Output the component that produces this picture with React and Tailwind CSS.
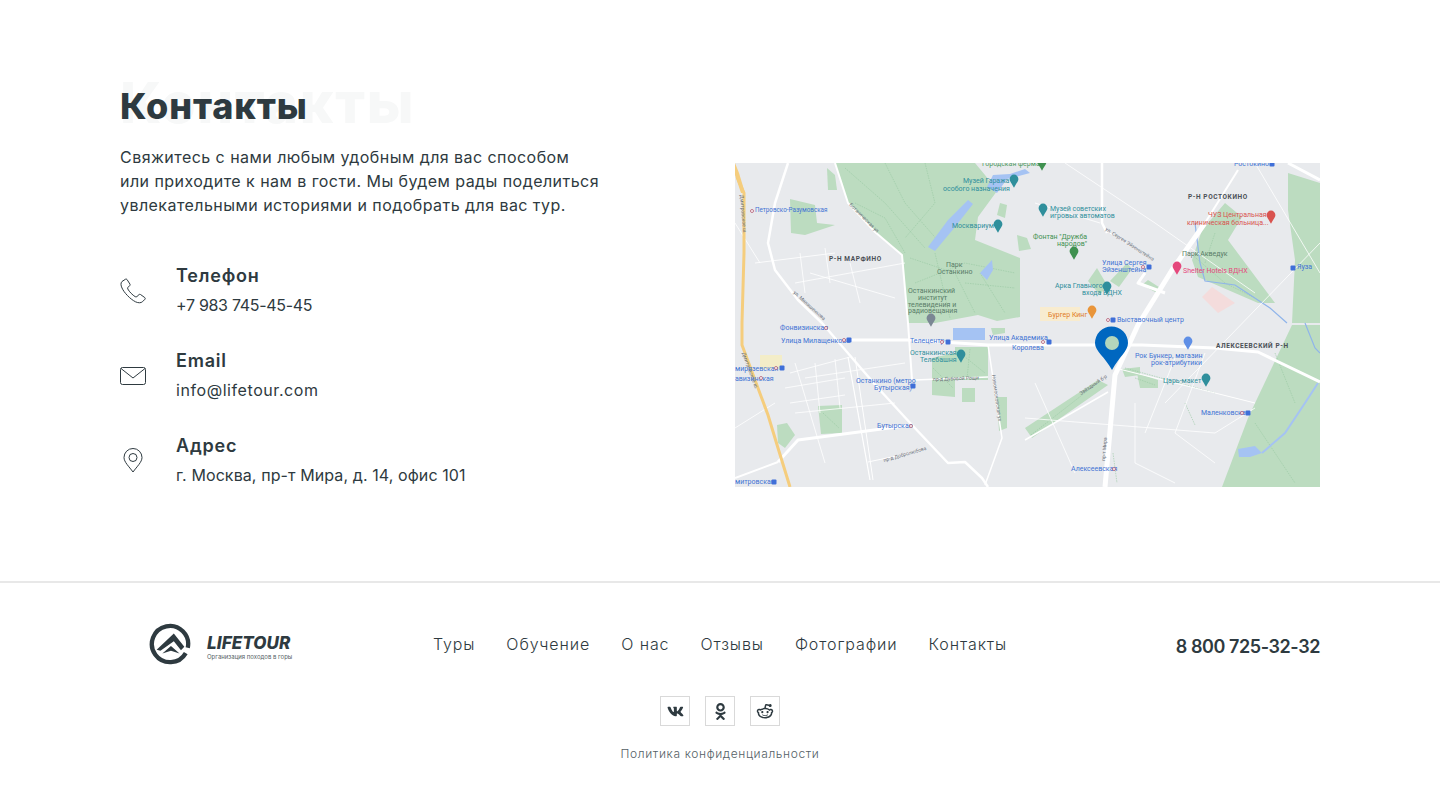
import { FaVk, FaOdnoklassniki } from "react-icons/fa";
import { RiRedditLine } from "react-icons/ri";

const navLinks = ["Туры", "Обучение", "О нас", "Отзывы", "Фотографии", "Контакты"];

const greens = [
  "100,0 240,0 250,12 262,28 243,54 240,77 285,95 285,154 262,158 243,152 200,160 173,160 167,92 140,69 113,40",
  "92,5 100,12 102,27 93,27",
  "55,36 80,42 82,60 100,62 70,72 56,70",
  "265,40 272,42 270,55 262,52",
  "282,72 292,75 296,86 284,88",
  "467,67 490,40 507,54 493,77 540,140 523,140 463,114 457,97",
  "553,10 585,20 585,160 557,160 560,97 553,47",
  "557,162 585,162 585,324 487,324 513,255",
  "297,275 373,222 363,217 290,265",
  "220,184 253,184 253,217 220,217",
  "197,195 220,190 220,234 197,232",
  "227,225 240,225 240,239 227,239",
  "83,243 107,242 107,270 86,271",
  "42,262 52,260 60,272 50,285 43,280",
  "262,234 272,234 272,265 264,268",
  "387,206 405,204 405,212 390,214",
  "402,210 423,217 423,225 405,225",
  "353,118 362,105 372,122 365,132",
  "375,118 392,100 397,106 384,124",
  "407,122 413,117 427,126 422,130",
  "256,165 270,165 270,170 258,172",
];

const parkPaths = [
  "110,5 150,40 190,85",
  "150,0 170,40 205,80",
  "190,0 200,40 170,75",
  "120,40 150,55 170,90",
  "175,95 220,110 240,150",
  "180,120 230,100 280,110",
  "200,90 215,155",
  "245,110 270,150",
  "230,120 280,125",
  "225,190 250,210",
  "235,186 232,216",
  "198,205 218,225",
  "88,250 104,265",
  "400,215 420,222",
  "455,90 490,120 520,135",
  "480,70 470,100",
  "296,272 360,222",
  "390,205 480,230",
  "450,240 460,262",
  "378,290 382,320",
  "520,260 560,320",
  "540,190 560,240",
];

const ponds = [
  "193,84 213,57 233,37 238,41 220,64 200,88",
  "245,110 257,97 258,107 252,117",
  "218,165 250,165 250,177 218,177",
  "252,24 258,12 275,11 290,6 295,10 272,16 262,30",
  "503,286 520,283 527,290 515,294 504,294",
];

const whiteRoads = [
  ["53,0 40,40 33,80 40,107 63,137 87,160 143,225 177,262 213,300 230,299 247,315 253,324", 2.5],
  ["100,0 113,40 140,69 167,92 173,160 177,217", 2],
  ["113,177 177,177 253,182 407,182 480,185 523,189 585,219", 3],
  ["470,60 437,107 403,162 380,212 370,324", 5],
  ["503,7 470,60", 2],
  ["553,0 585,17", 3],
  ["367,0 367,60 372,70", 2.5],
  ["43,299 63,277 177,262", 3],
  ["113,194 135,317", 1.2],
  ["120,194 138,317", 1],
  ["180,217 253,214", 1.5],
  ["253,182 267,275 250,322", 1.5],
  ["0,315 43,299", 2],
  ["410,110 403,120 430,130", 3],
  ["290,277 373,229", 1.5],
  ["380,205 520,240", 1],
  ["133,299 190,287", 1],
  ["20,100 100,90", 0.8],
  ["60,120 170,100", 0.8],
  ["70,215 170,200", 0.8],
  ["60,250 160,240", 0.8],
  ["60,200 90,300", 0.8],
  ["55,210 115,194", 0.8],
  ["80,200 85,250", 0.8],
  ["100,196 105,245", 0.8],
  ["50,225 110,215", 0.8],
  ["55,240 110,232", 0.8],
  ["65,90 70,130", 0.8],
  ["90,85 95,120", 0.8],
  ["115,100 125,140", 0.8],
  ["75,110 160,135", 0.8],
  ["370,67 418,97", 1],
  ["520,0 585,110", 0.8],
  ["430,240 585,80", 0.8],
  ["290,255 480,270 520,245", 0.8],
  ["300,220 340,310", 0.8],
  ["420,60 520,130", 0.8],
  ["400,240 400,300 440,320", 0.8],
  ["440,195 410,270", 0.8],
  ["470,190 440,270 480,300", 0.8],
  ["300,40 365,60", 0.8],
  ["330,0 420,60", 0.8],
  ["0,60 25,100", 0.8],
  ["0,265 40,240", 0.8],
];

const roadLabels = [
  [114, 42, 45, "Ботаническая ул"],
  [58, 130, 42, "ул. Милашенкова"],
  [7, 190, 70, "Дмитровское ш."],
  [5, 32, 85, "Дмитровское ш."],
  [370, 298, -85, "пр-т Мира"],
  [346, 232, -34, "Звёздный б-р"],
  [198, 218, -2, "пр-д Дубовой Рощи"],
  [149, 299, -16, "пр-д Добролюбова"],
  [370, 67, 33, "ул. Сергея Эйзенштейна"],
  [257, 212, 82, "Новомосковская ул"],
];

const labels = [
  ["#3f73d4", 20, 49, "Петровско-Разумовская", 6.3],
  ["#3f73d4", 45, 167, "Фонвизинская"],
  ["#3f73d4", 46, 180, "Улица Милащенкова"],
  ["#3f73d4", 0, 208, "мирязевская"],
  ["#3f73d4", 0, 218, "авизинская"],
  ["#3f73d4", 121, 220, "Останкино (метро"],
  ["#3f73d4", 139, 227, "Бутырская)"],
  ["#3f73d4", 142, 265, "Бутырская"],
  ["#3f73d4", 0, 321, "митровская"],
  ["#3f73d4", 175, 180, "Телецентр"],
  ["#3f73d4", 254, 177, "Улица Академика"],
  ["#3f73d4", 277, 187, "Королева"],
  ["#3f73d4", 367, 102, "Улица Сергея"],
  ["#3f73d4", 367, 109, "Эйзенштейна"],
  ["#3f73d4", 382, 159, "Выставочный центр"],
  ["#3f73d4", 400, 195, "Рок Бункер, магазин"],
  ["#3f73d4", 416, 202, "рок-атрибутики"],
  ["#3f73d4", 466, 252, "Маленковская"],
  ["#3f73d4", 336, 308, "Алексеевская"],
  ["#3f73d4", 562, 106, "Яуза"],
  ["#3f73d4", 499, 3, "Ростокино"],
  ["#4f9a5f", 247, 3, "Городская ферма"],
  ["#2f8f9c", 228, 20, "Музей Гаража"],
  ["#2f8f9c", 208, 28, "особого назначения"],
  ["#2f8f9c", 217, 65, "Москвариум"],
  ["#5a7d68", 173, 130, "Останкинский"],
  ["#5a7d68", 183, 137, "институт"],
  ["#5a7d68", 173, 144, "телевидения и"],
  ["#5a7d68", 173, 150, "радиовещания"],
  ["#2f8f9c", 175, 192, "Останкинская"],
  ["#2f8f9c", 185, 199, "Телебашня"],
  ["#2f8f9c", 315, 48, "Музей советских"],
  ["#2f8f9c", 315, 55, "игровых автоматов"],
  ["#2f8f9c", 320, 125, "Арка Главного"],
  ["#2f8f9c", 347, 132, "входа ВДНХ"],
  ["#2f8f9c", 428, 220, "Царь-макет"],
  ["#3f9150", 298, 76, "Фонтан \"Дружба"],
  ["#3f9150", 322, 83, "народов\""],
  ["#5a7d68", 211, 104, "Парк"],
  ["#5a7d68", 202, 111, "Останкино"],
  ["#5a7d68", 447, 93, "Парк Акведук"],
  ["#e07b1f", 313, 154, "Бургер Кинг"],
  ["#d9534f", 473, 54, "ЧУЗ Центральная"],
  ["#d9534f", 452, 62, "клиническая больница..."],
  ["#e5487c", 448, 110, "Shelter Hotels ВДНХ"],
];

const districts = [
  [94, 98, "Р-Н МАРФИНО"],
  [453, 36, "Р-Н РОСТОКИНО"],
  [481, 185, "АЛЕКСЕЕВСКИЙ Р-Н"],
];

const poiPins = [
  ["#2f8f9c", 279, 20],
  ["#2f8f9c", 263, 65],
  ["#2f8f9c", 226, 195],
  ["#2f8f9c", 308, 49],
  ["#2f8f9c", 372, 127],
  ["#2f8f9c", 471, 219],
  ["#3f9150", 339, 92],
  ["#3f9150", 307, 3],
  ["#e9953a", 357, 151],
  ["#d9534f", 536, 56],
  ["#e5487c", 442, 107],
  ["#5f8fe6", 453, 182],
  ["#7b8794", 196, 159],
];

const metroSquares = [
  [114, 177], [47, 205], [178, 223], [39, 319], [213, 179], [314, 179],
  [414, 104], [378, 157], [513, 250], [558, 105], [537, 1],
];

const metroDots = [
  [17, 48], [91, 165], [109, 177], [41, 205], [26, 215], [176, 263], [207, 179], [308, 179], [408, 104], [373, 157], [507, 250], [379, 306],
];

function MapPicture() {
  return (
    <svg viewBox="0 0 585 324" className="w-full h-full block" style={{ fontFamily: "Roboto, sans-serif" }}>
      <rect width="585" height="324" fill="#e8eaed" />
      {greens.map((p) => (
        <polygon key={p} points={p} fill="#bcdcc0" />
      ))}
      {parkPaths.map((p) => (
        <polyline key={p} points={p} fill="none" stroke="#97c7a1" strokeWidth="0.6" strokeDasharray="1.500 1" />
      ))}
      <polygon points="467,134 477,124 500,140 483,150" fill="#f4dcdc" />
      <rect x="25" y="192" width="22" height="14" fill="#f3edc8" />
      <rect x="305" y="144" width="40" height="14" fill="#f8eccf" />
      {ponds.map((p) => (
        <polygon key={p} points={p} fill="#a5c3f3" />
      ))}
      <polyline points="460,60 465,100 470,118 500,122 535,145 552,160" fill="none" stroke="#8fb4ea" strokeWidth="1.2" />
      <polyline points="527,290 550,270 570,240 583,220" fill="none" stroke="#a5c3f3" strokeWidth="2" />
      <polyline points="570,160 580,185 585,190" fill="none" stroke="#8fb4ea" strokeWidth="1.2" />
      {whiteRoads.map(([p, w]) => (
        <polyline key={p} points={p} fill="none" stroke="#ffffff" strokeWidth={w} strokeLinejoin="round" />
      ))}
      <polyline
        points="2,14 9,30 9,90 7,160 7,182 33,252 43,285 55,324"
        fill="none"
        stroke="#f5cd7d"
        strokeWidth="3"
      />
      <polygon points="0,0 4,10 10,30 6,30 0,12" fill="#f5cd7d" />
      {roadLabels.map(([x, y, r, t]) => (
        <text key={`${x}${t}`} transform={`translate(${x} ${y}) rotate(${r})`} fontSize="5" fill="#6b7078">
          {t}
        </text>
      ))}
      {districts.map(([x, y, t]) => (
        <text key={t} x={x} y={y} fontSize="6.5" fontWeight="700" letterSpacing="0.6" fill="#4a4f55">
          {t}
        </text>
      ))}
      {labels.map(([c, x, y, t, s]) => (
        <text key={t} x={x} y={y} fontSize={s || 7} fill={c}>
          {t}
        </text>
      ))}
      {metroDots.map(([x, y]) => (
        <circle key={`${x}-${y}`} cx={x} cy={y} r="1.500" fill="#ffffff" stroke="#b0566f" strokeWidth="0.8" />
      ))}
      {metroSquares.map(([x, y]) => (
        <rect key={`${x}-${y}`} x={x - 2.5} y={y - 2.5} width="5" height="5" rx="1" fill="#3f6fd8" />
      ))}
      {poiPins.map(([c, x, y]) => (
        <path key={`${x}-${y}`} transform={`translate(${x} ${y}) scale(0.8)`} d="M0 6C-3 0-5.500-2-5.500-5A5.500 5.500 0 0 1 5.500-5C5.500-2 3 0 0 6Z" fill={c} />
      ))}
      <path d="M377 207C370 194 360 188 360 180A16.500 16.500 0 0 1 393 180C393 188 384 194 377 207Z" fill="#0067c0" />
      <circle cx="377" cy="180" r="7" fill="#b3d6bc" />
    </svg>
  );
}

function Logo() {
  return (
    <div className="flex items-center gap-4 ml-[29px]">
      <svg width="42" height="42" viewBox="0 0 44 44" className="shrink-0">
        <path d="M38.500 31.500A19 19 0 1 1 40.600 26" fill="none" stroke="#2e3a40" strokeWidth="4.500" />
        <path d="M8 28L26 11L37 25L33.500 28.500L26 19L19 24L12 29Z" fill="#2e3a40" />
        <path d="M14 32L23 24L32 32L23 29Z" fill="#2e3a40" />
      </svg>
      <div className="pt-[7px]">
        <div className="text-[17px] leading-[18px] font-extrabold italic text-[#2e3a40] tracking-[0.1px]">LIFETOUR</div>
        <div className="mt-[1px] text-[6px] leading-[8px] text-[#555f66]">Организация походов в горы</div>
      </div>
    </div>
  );
}

function ContactRow({ icon, title, value, valueClass }) {
  return (
    <div className="flex items-center">
      <div className="w-14 flex shrink-0">{icon}</div>
      <div>
        <div className="text-lg leading-6 font-semibold text-[#2e3a40] tracking-[0.8px]">{title}</div>
        <div className={`mt-[5px] text-base leading-6 text-[#2e3a40] ${valueClass}`}>{value}</div>
      </div>
    </div>
  );
}

const iconStroke = { fill: "none", stroke: "#2e3a40", strokeWidth: 1 };

export default function App() {
  return (
    <div className="bg-white min-h-[792px] font-['Inter',sans-serif] text-[#2e3a40]">
      <section className="flex justify-between px-[120px] pt-[84px]">
        <div>
          <div className="relative">
            <div className="absolute left-0 -top-[13px] text-[56px] leading-[64px] font-extrabold text-[#f7f8f8] tracking-[1.8px] whitespace-nowrap">
              Контакты
            </div>
            <h2 className="relative text-[36px] leading-[44px] font-extrabold tracking-[0.9px]">Контакты</h2>
          </div>
          <p className="mt-[17px] text-base leading-6 tracking-[0.45px] whitespace-nowrap">
            Свяжитесь с нами любым удобным для вас способом
            <br />
            или приходите к нам в гости. Мы будем рады поделиться
            <br />
            увлекательными историями и подобрать для вас тур.
          </p>
          <div className="mt-[47px] flex flex-col gap-[32px]">
            <ContactRow
              title="Телефон"
              value="+7 983 745-45-45"
              valueClass="tracking-[-0.3px]"
              icon={
                <svg width="26" height="26" viewBox="0 0 26 26" {...iconStroke}>
                  <path d="M5.500 1.200L2 3.500C.5 5 .8 7.500 2 10C4 14.500 10 21 15.500 23.800C18.500 25.200 21 25 22.500 23.700L25 21.200C25.400 20.700 25.300 20 24.800 19.600L20.500 16.500C20 16.200 19.400 16.200 19 16.600L17 18.500C16.500 19 15.800 19 15.200 18.700C12.500 17 9.500 14 7.800 11C7.500 10.400 7.600 9.700 8 9.300L9.800 7.500C10.200 7 10.200 6.400 9.900 6L7 1.500C6.600 1 6 .9 5.500 1.200Z" />
                </svg>
              }
            />
            <ContactRow
              title="Email"
              value="info@lifetour.com"
              valueClass="tracking-[0.57px]"
              icon={
                <svg width="26" height="18" viewBox="0 0 26 18" {...iconStroke}>
                  <rect x="0.500" y="0.500" width="25" height="17" rx="2" />
                  <path d="M1 1.500L13 11L25 1.500" />
                </svg>
              }
            />
            <ContactRow
              title="Адрес"
              value="г. Москва, пр-т Мира, д. 14, офис 101"
              valueClass="tracking-[0.1px]"
              icon={
                <svg width="20" height="25" viewBox="0 0 20 25" className="ml-[3px]" {...iconStroke}>
                  <path d="M10 24C6 18.500 1 14 1 9.500A9 9 0 0 1 19 9.500C19 14 14 18.500 10 24Z" />
                  <circle cx="10" cy="9.500" r="4" />
                </svg>
              }
            />
          </div>
        </div>
        <div className="w-[585px] h-[324px] mt-[79px] shrink-0">
          <MapPicture />
        </div>
      </section>

      <footer className="mt-[94px] border-t-2 border-[#e8e8e8]">
        <div className="flex items-center justify-between px-[120px] pt-[40px]">
          <div className="w-[260px]">
            <Logo />
          </div>
          <nav className="flex gap-[31px] text-base leading-6 tracking-[0.9px] font-light">
            {navLinks.map((l) => (
              <a key={l} href="#" className="whitespace-nowrap">
                {l}
              </a>
            ))}
          </nav>
          <div className="w-[260px] pt-[6px] text-right text-lg leading-6 font-semibold tracking-[-0.43px]">8 800 725-32-32</div>
        </div>
        <div className="mt-[31px] flex justify-center gap-[15px]">
          <a href="#" className="w-[30px] h-[30px] border border-[#d9d9d9] flex items-center justify-center">
            <FaVk size={17} color="#2e3a40" />
          </a>
          <a href="#" className="w-[30px] h-[30px] border border-[#d9d9d9] flex items-center justify-center">
            <FaOdnoklassniki size={17} color="#2e3a40" />
          </a>
          <a href="#" className="w-[30px] h-[30px] border border-[#d9d9d9] flex items-center justify-center">
            <RiRedditLine size={18} color="#2e3a40" />
          </a>
        </div>
        <div className="mt-[20px] text-center text-xs leading-4 font-light text-[#555f66] tracking-[0.63px]">
          Политика конфиденциальности
        </div>
      </footer>
    </div>
  );
}
